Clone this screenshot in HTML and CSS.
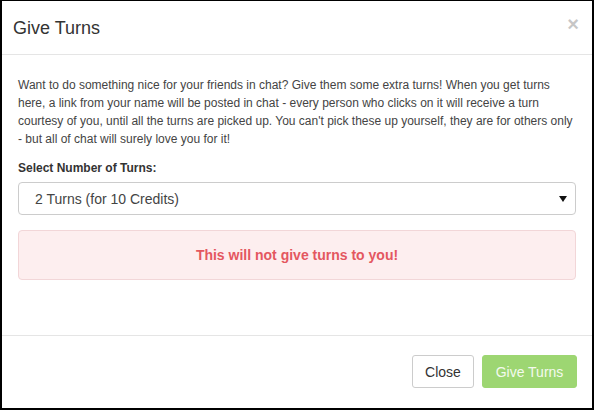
FILE: index.html
```html
<!DOCTYPE html>
<html>
<head>
<meta charset="utf-8">
<link rel="stylesheet" href="styles.css">
</head>
<body>
<div class="modal">
  <div class="modal-header">
    <h4 class="modal-title">Give Turns</h4>
    <span class="close">&times;</span>
  </div>
  <div class="modal-body">
    <p class="intro">Want to do something nice for your friends in chat? Give them some extra turns! When you get turns here, a link from your name will be posted in chat - every person who clicks on it will receive a turn courtesy of you, until all the turns are picked up. You can't pick these up yourself, they are for others only - but all of chat will surely love you for it!</p>
    <label class="label">Select Number of Turns:</label>
    <div class="select">
      <span>2 Turns (for 10 Credits)</span>
      <svg class="caret" width="8" height="6" viewBox="0 0 8 6"><path d="M0 0H8L4 6Z" fill="#111"/></svg>
    </div>
    <div class="alert">This will not give turns to you!</div>
  </div>
  <div class="modal-footer">
    <span class="btn btn-default">Close</span>
    <span class="btn btn-success">Give Turns</span>
  </div>
</div>
</body>
</html>
```
FILE: styles.css
```css
html, body {
  margin: 0;
  padding: 0;
  background: #fff;
}
body {
  font-family: "Liberation Sans", Arial, sans-serif;
  color: #333;
}
.modal {
  box-sizing: border-box;
  width: 594px;
  height: 410px;
  border: 2px solid #000;
  border-top-width: 1px;
  display: flex;
  flex-direction: column;
  background: #fff;
}
.modal-header {
  height: 53px;
  border-bottom: 1px solid #e5e5e5;
  display: flex;
  align-items: center;
  justify-content: space-between;
  padding: 0 13px 0 11px;
  box-sizing: content-box;
}
.modal-title {
  margin: 0;
  font-size: 18px;
  font-weight: normal;
  color: #333;
  line-height: 26px;
  padding-top: 1px;
}
.close {
  font-size: 20px;
  font-weight: bold;
  color: #000;
  opacity: 0.22;
  line-height: 20px;
  margin-top: -8px;
}
.modal-body {
  flex: 1;
  padding: 21px 16px 0 16px;
}
.intro {
  margin: 0;
  font-size: 12px;
  line-height: 18px;
  color: #444;
}
.label {
  display: block;
  margin-top: 12px;
  font-size: 12px;
  font-weight: bold;
  color: #333;
  line-height: 16px;
}
.select {
  margin-top: 6px;
  height: 31px;
  border: 1px solid #ccc;
  border-radius: 4px;
  display: flex;
  align-items: center;
  justify-content: space-between;
  padding: 0 8px 0 16px;
  font-size: 14px;
  color: #444;
}
.caret {
  display: block;
}
.alert {
  margin-top: 15px;
  height: 48px;
  border: 1px solid #f2d6d8;
  border-radius: 4px;
  background: #fdeeef;
  color: #e4575f;
  font-weight: bold;
  font-size: 14px;
  display: flex;
  align-items: center;
  justify-content: center;
}
.modal-footer {
  height: 71px;
  border-top: 1px solid #e5e5e5;
  display: flex;
  align-items: center;
  justify-content: flex-end;
  gap: 8px;
  padding: 0 15px 1px 0;
}
.btn {
  box-sizing: border-box;
  height: 33px;
  display: flex;
  align-items: center;
  justify-content: center;
  font-size: 14px;
  border-radius: 3px;
}
.btn-default {
  width: 62px;
  border: 1px solid #ccc;
  color: #333;
  background: #fff;
}
.btn-success {
  width: 95px;
  background: #9dd672;
  color: #f4faee;
  border: 1px solid #9dd672;
}
```
